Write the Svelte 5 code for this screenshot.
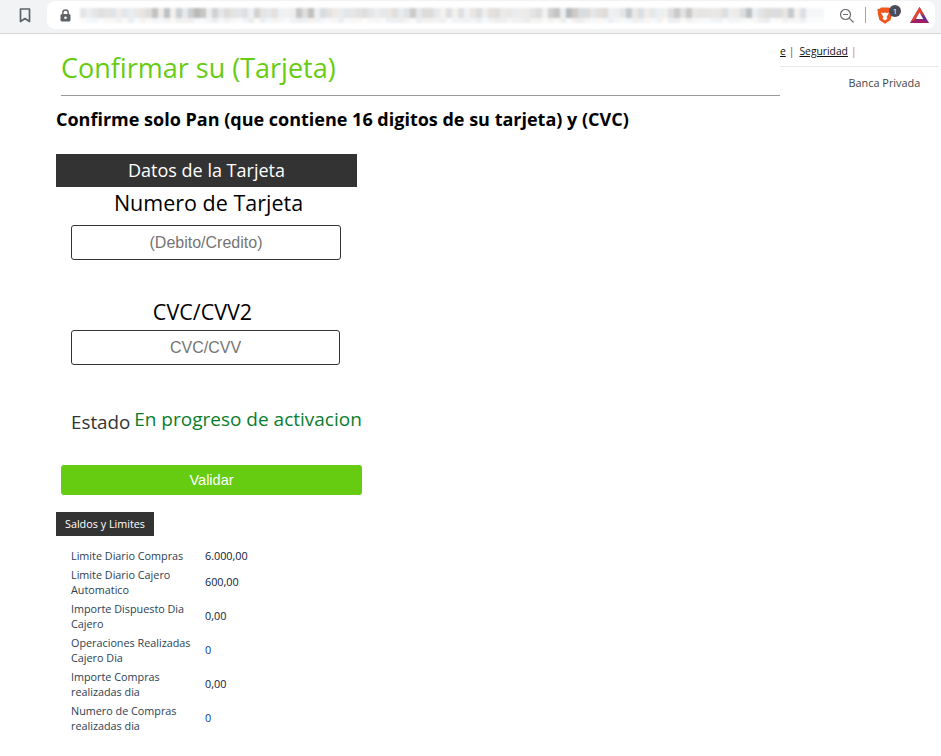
<script>
  let seed = 11;
  const rnd = () => ((seed = (seed * 16807) % 2147483647) / 2147483647);
  const tint = (base, spread) => {
    const v = base + Math.floor(rnd() * spread);
    const t = Math.floor(rnd() * 8) - 4;
    return `rgb(${v + t},${v},${v - t})`;
  };
  const top = Array.from({ length: 124 }, (_, i) => {
    const dark = rnd() > 0.85;
    return i > 120 ? '#f4f6f8' : tint(dark ? 185 : 220, dark ? 25 : 22);
  });
  const low = Array.from({ length: 124 }, (_, i) => (i > 120 ? '#fafbfc' : tint(236, 16)));
  const rows = [
    ['Limite Diario Compras', '6.000,00', 'dark'],
    ['Limite Diario Cajero Automatico', '600,00', 'dark'],
    ['Importe Dispuesto Dia Cajero', '0,00', 'dark'],
    ['Operaciones Realizadas Cajero Dia', '0', 'blue'],
    ['Importe Compras realizadas dia', '0,00', 'dark'],
    ['Numero de Compras realizadas dia', '0', 'blue']
  ];
</script>

<div class="page">
  <header class="toolbar">
    <svg class="bookmark" width="12" height="15" viewBox="0 0 12 15"><path d="M1.500 1h9v12.500L6 10.500l-4.500 3z" fill="none" stroke="#5f6368" stroke-width="1.700" stroke-linejoin="round"/></svg>
    <div class="address">
      <svg class="lock" width="11" height="13" viewBox="0 0 11 13"><path d="M2.800 5.500V3.700a2.700 2.700 0 0 1 5.400 0v1.800" fill="none" stroke="#5f6368" stroke-width="1.400"/><rect x=".5" y="5" width="10" height="7.500" rx="1.500" fill="#5f6368"/><circle cx="5.500" cy="8.700" r="1.300" fill="#fff"/></svg>
      <div class="url">
        <div class="url-row big">{#each top as c}<span style="background:{c}"></span>{/each}</div>
        <div class="url-row small">{#each low as c}<span style="background:{c}"></span>{/each}</div>
      </div>
      <svg class="zoom" width="14" height="14" viewBox="0 0 14 14"><circle cx="5.500" cy="5.500" r="5" fill="none" stroke="#6a6e72" stroke-width="1.200"/><path d="M3 5.500h5M9.200 9.200L13.500 13.500" stroke="#6a6e72" stroke-width="1.200" fill="none"/></svg>
      <div class="sep"></div>
      <div class="brave">
        <svg width="16" height="17" viewBox="0 0 16 17"><path d="M4 .5h8l1.400 1.500 1.700-.3.700 1.900-.9 1.200.5 1.300-1.800 7L8 16.800l-5.600-3.700-1.800-7 .5-1.300-.9-1.200.7-1.900 1.700.3z" fill="#f1561f"/><path d="M4 5.500l2.500.5L8 5.500l1.500.5L12 5.500l-1.500 3-1 1.500 1 1.500L8 13.500l-2.500-2 1-1.500-1-1.500z" fill="#fff"/></svg>
        <span class="badge">1</span>
      </div>
      <svg class="bat" width="19" height="16" viewBox="0 0 19 16"><path d="M9.500 0L19 16H0z" fill="#662d91"/><path d="M9.500 0L15 9.300 9.500 6 5 12.500 0 16z" fill="#e8452c"/><path d="M0 16l5-3.500h9L19 16z" fill="#9e1f63"/><path d="M9.500 5.500l3.700 6.500H5.800z" fill="#fff"/></svg>
    </div>
  </header>

  <div class="body">
    <main class="main">
      <h1>Confirmar su (Tarjeta)</h1>
      <h2>Confirme solo Pan (que contiene 16 digitos de su tarjeta) y (CVC)</h2>

      <section class="card">
        <div class="card-head">Datos de la Tarjeta</div>
        <label class="field-label pan-label" for="pan">Numero de Tarjeta</label>
        <input id="pan" class="pan" placeholder="(Debito/Credito)" />
        <label class="field-label cvc-label" for="cvc">CVC/CVV2</label>
        <input id="cvc" class="cvc" placeholder="CVC/CVV" />
        <p class="state"><span class="state-name">Estado</span> <span class="state-value">En progreso de activacion</span></p>
        <button class="submit">Validar</button>
      </section>

      <div class="tag">Saldos y Limites</div>
      <table>
        <tbody>
          {#each rows as r}
            <tr>
              <td class="name">{r[0]}</td>
              <td class="val {r[2]}">{r[1]}</td>
            </tr>
          {/each}
        </tbody>
      </table>
    </main>

    <aside class="side">
      <div class="links"><u class="cut">e</u><span class="bar">|</span><u>Seguridad</u><span class="bar orange">|</span></div>
      <div class="private">Banca Privada</div>
    </aside>
  </div>
</div>

<style>
  :global(body) { margin: 0; background: #fff; }
  .page { width: 941px; height: 756px; overflow: hidden; font-family: "Open Sans", sans-serif; background: #fff; }

  .toolbar { height: 34px; box-sizing: border-box; background: #f1f3f4; border-bottom: 1px solid #d2d6d6; display: flex; align-items: flex-start; padding: 1px 6px 0 19px; }
  .bookmark { margin: 7px 16px 0 0; flex: none; }
  .address { flex: 1; height: 28px; background: #fff; border-radius: 8px; display: flex; align-items: center; padding-left: 13px; min-width: 0; }
  .lock { flex: none; margin-right: 10px; }
  .url { width: 744px; flex: none; margin-left: -1px; filter: blur(0.800px); }
  .url-row { display: grid; grid-template-columns: repeat(124, 6px); }
  .big { height: 10px; }
  .small { height: 5px; }
  .zoom { flex: none; margin: 1px 0 0 16px; }
  .sep { width: 1px; height: 16px; background: #a8a8a8; margin-left: 11px; flex: none; }
  .brave { position: relative; width: 16px; height: 17px; margin-left: 11px; flex: none; }
  .badge { position: absolute; left: 12px; top: -2px; width: 12px; height: 12px; border-radius: 50%; background: #4a4d57; color: #fff; font: 8px/12px "Open Sans", sans-serif; text-align: center; }
  .bat { margin-left: 17px; flex: none; }

  .body { display: grid; grid-template-columns: 780px 161px; }
  .main { padding-left: 56px; min-width: 0; }

  h1 { margin: 0 0 0 5px; height: 62px; box-sizing: border-box; padding-top: 15px; font-size: 27px; line-height: 38px; font-weight: 400; color: #66cc11; border-bottom: 1px solid #999; }
  h2 { margin: 11px 0 0; font-size: 18px; line-height: 25px; font-weight: 700; color: #000; white-space: nowrap; }

  .card { width: 306px; margin-top: 22px; display: flex; flex-direction: column; }
  .card-head { width: 301px; height: 33px; background: #333; color: #fff; font-size: 18px; line-height: 33px; text-align: center; }
  .field-label { width: 301px; font-size: 21.500px; line-height: 30px; color: #000; text-align: center; }
  .pan-label { margin: 1px 0 0 2px; }
  input { box-sizing: border-box; height: 35px; margin: 7px 0 0 15px; padding: 0 12px; border: 1px solid #333; border-radius: 3px; background: #fff; font: 16px "Liberation Sans", sans-serif; text-align: center; outline: none; }
  input::placeholder { color: #757575; opacity: 1; }
  .pan { width: 270px; }
  .cvc { width: 269px; margin-top: 3px; }
  .cvc-label { margin: 37px 0 0 -4px; }
  .state { margin: 40px 0 0 15px; line-height: 30px; white-space: nowrap; font-size: 18.800px; }
  .state-name { color: #333; position: relative; top: 2px; }
  .state-value { color: #0a7d2c; font-size: 19px; position: relative; top: -1px; left: -1px; }
  .submit { width: 301px; height: 30px; margin: 30px 0 0 5px; padding: 0; border: 0; border-radius: 3px; background: #66cc11; color: #fff; font: 14.500px "Liberation Sans", sans-serif; }

  .tag { width: 98px; height: 24px; margin-top: 17px; background: #333; color: #fff; font-size: 10.800px; line-height: 24px; text-align: center; white-space: nowrap; }
  table { border-collapse: collapse; margin: 10px 0 0 15px; width: 190px; font-size: 10.800px; line-height: 15px; }
  td { padding: 2px 0; vertical-align: middle; }
  .name { width: 134px; color: #2c3e52; }
  .val { white-space: nowrap; position: relative; top: -1px; }
  tr:first-child .val { top: 0; }
  .dark { color: #0b1a3a; }
  .blue { color: #0a3a8c; }

  .side { font-size: 10.300px; color: #333; min-width: 0; }
  .links { height: 33px; box-sizing: border-box; border-bottom: 1px solid #e6e6e6; width: 159px; padding-top: 10px; line-height: 15px; white-space: nowrap; color: #111; }
  .bar { margin: 0 5px 0 3px; color: #555; }
  .orange { color: #d9822b; margin-left: 3px; }
  .private { margin: 8px 0 0 68.500px; font-size: 10.900px; line-height: 15px; color: #444; white-space: nowrap; }
</style>
